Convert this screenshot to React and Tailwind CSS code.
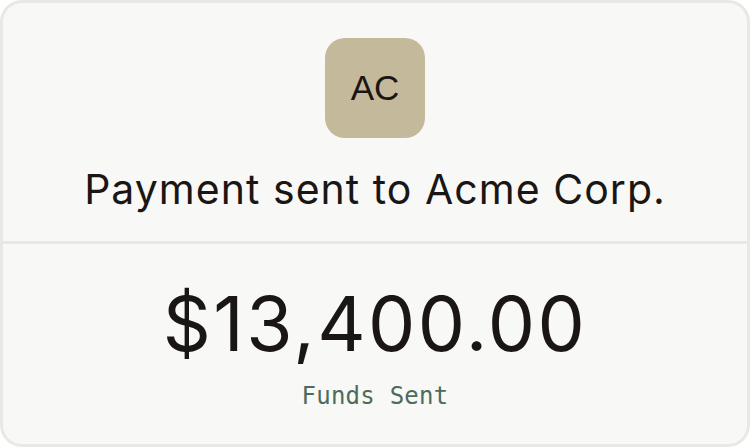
export default function App() {
  return (
    <div className="w-[750px] h-[447px] bg-white">
      <div
        className="w-full h-full rounded-[22px] border-[3px] border-[#e9e8e4] bg-[#f8f8f7] flex flex-col overflow-hidden"
        style={{ fontFamily: 'Inter, "Noto Sans", sans-serif' }}
      >
        {/* Recipient */}
        <div className="h-[238px] flex flex-col items-center pt-[35px]">
          <div className="w-[100px] h-[100px] rounded-[20px] bg-[#c5b99b] flex items-center justify-center">
            <span className="text-[35px] text-[#1a1614]" style={{ fontFamily: '"Liberation Sans", Arial, sans-serif' }}>AC</span>
          </div>
          <h1 className="mt-[31px] text-[41px] leading-none text-[#1a1614] tracking-[0.025em]">
            Payment sent to Acme Corp.
          </h1>
        </div>

        <div className="h-[3px] bg-[#e9e8e4]" />

        {/* Amount */}
        <div className="flex-1 flex flex-col items-center pt-[42px]">
          <div className="text-[75px] leading-none text-[#1a1614] tracking-[0.032em]">$13,400.00</div>
          <div
            className="mt-[23px] text-[24px] leading-none text-[#4c6b5c] tracking-[0.01em]"
            style={{ fontFamily: '"DejaVu Sans Mono", monospace' }}
          >
            Funds Sent
          </div>
        </div>
      </div>
    </div>
  )
}
